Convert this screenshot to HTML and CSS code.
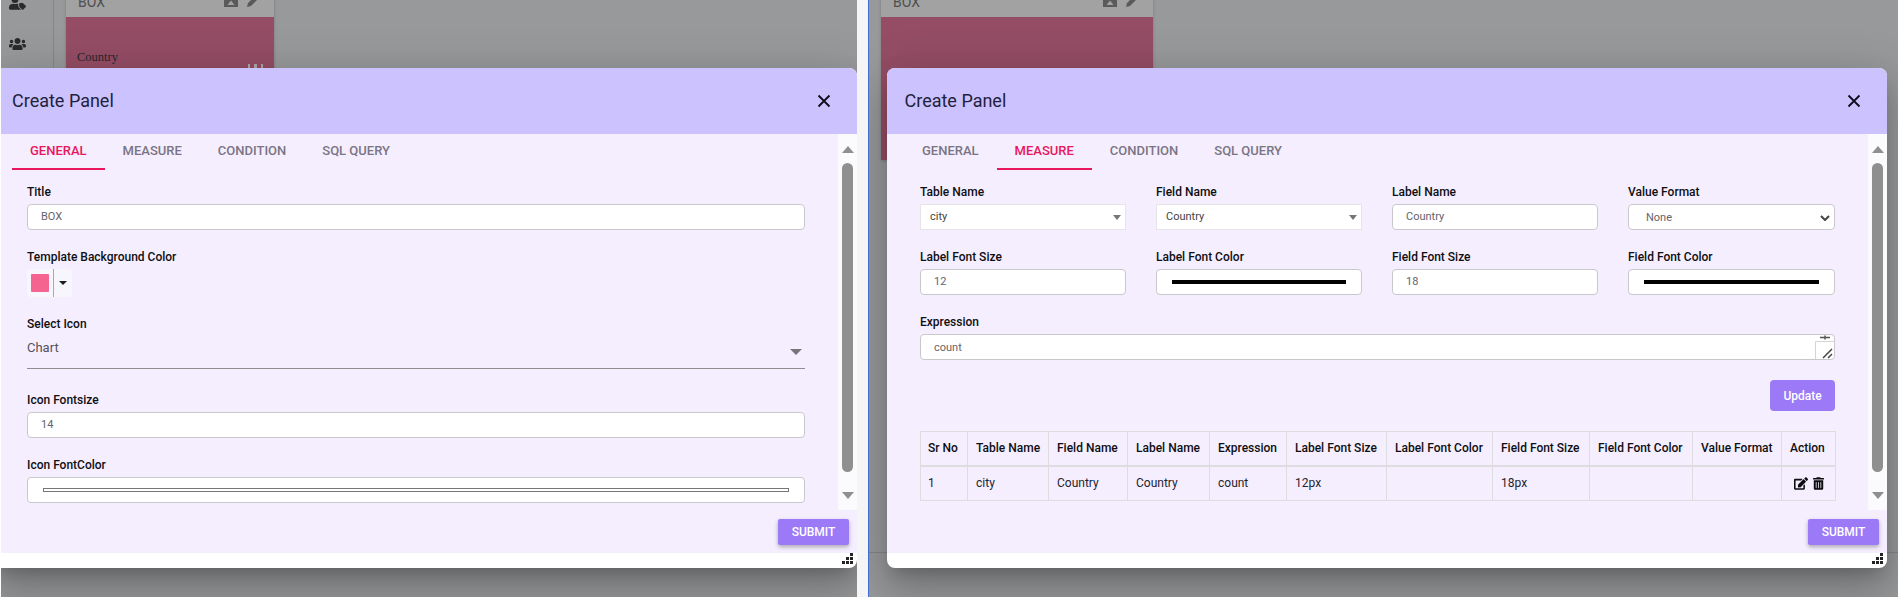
FILE: index.html
```html
<!DOCTYPE html>
<html lang="en">
<head>
<meta charset="utf-8">
<title>Create Panel</title>
<link rel="stylesheet" href="styles.css">
</head>
<body>

<!-- left window : General tab -->
<div class="pane pane-left">
  <div class="page">
    <div class="page-main">
      <div class="sidebar">
        <svg class="side-icon" viewBox="0 0 640 512"><circle cx="224" cy="128" r="128"/><path d="M0 464v-40c0-88 70-138 162-138 40 16 84 16 124 0 22 0 42 3 62 8v70c0 22 8 42 24 58l86 86H48c-26 0-48-18-48-44z"/><path d="M416 256h80c16 0 32 6 44 18l90 90c13 13 13 33 0 46l-92 92c-13 13-33 13-46 0l-90-90c-12-12-18-28-18-44v-80c0-18 14-32 32-32z"/></svg>
        <svg class="side-icon" viewBox="0 0 640 512"><path d="M96 224c35.3 0 64-28.7 64-64s-28.7-64-64-64-64 28.7-64 64 28.7 64 64 64zm448 0c35.3 0 64-28.7 64-64s-28.7-64-64-64-64 28.7-64 64 28.7 64 64 64zm32 32h-64c-17.6 0-33.5 7.1-45.1 18.6 40.3 22.1 68.9 62 75.1 109.4h66c17.7 0 32-14.3 32-32v-32c0-35.3-28.7-64-64-64zm-256 0c61.9 0 112-50.1 112-112S381.9 32 320 32 208 82.1 208 144s50.1 112 112 112zm76.8 32h-8.3c-20.8 10-43.9 16-68.5 16s-47.6-6-68.5-16h-8.3C179.6 288 128 339.6 128 403.2V432c0 26.5 21.5 48 48 48h288c26.5 0 48-21.5 48-48v-28.8c0-63.6-51.6-115.2-115.2-115.2zm-223.7-13.4C161.5 263.1 145.6 256 128 256H64c-35.3 0-64 28.7-64 64v32c0 17.7 14.3 32 32 32h65.9c6.3-47.4 34.9-87.3 75.2-109.4z"/></svg>
      </div>
      <div class="card card-small">
        <div class="card-head">
          <span class="card-name">BOX</span>
          <svg class="card-icon" viewBox="0 0 14 14"><path d="M0 0h14v14H0z"/><path class="cut" d="M7 7.500l3.500 4.500h-7z"/></svg>
          <svg class="card-icon" viewBox="0 0 14 14"><path d="M9 2l3 3-8 8-4 1 1-4z"/></svg>
        </div>
        <div class="card-body">
          <div class="card-label">Country</div>
          <div class="card-bars"><i></i><i></i><i></i></div>
        </div>
      </div>
    </div>
    <div class="page-foot"></div>
  </div>

  <div class="dialog dialog-left">
    <div class="dialog-head">
      <h2>Create Panel</h2>
      <svg class="close-icon" viewBox="0 0 14 14"><path d="M1.500 1.500l11 11M12.500 1.500l-11 11"/></svg>
    </div>
    <div class="dialog-body">
      <div class="scroll-area">
        <div class="scroll-content">
          <div class="tabs">
            <div class="tab active">General</div>
            <div class="tab">Measure</div>
            <div class="tab">Condition</div>
            <div class="tab">SQL Query</div>
          </div>
          <div class="form">
            <div class="field">
              <label>Title</label>
              <div class="input">BOX</div>
            </div>
            <div class="field">
              <label>Template Background Color</label>
              <div class="color-btn"><span class="color-swatch"></span><span class="color-caret"></span></div>
            </div>
            <div class="field field-select">
              <label>Select Icon</label>
              <div class="mat-select">Chart<span class="arrow"></span></div>
            </div>
            <div class="field">
              <label>Icon Fontsize</label>
              <div class="input">14</div>
            </div>
            <div class="field">
              <label>Icon FontColor</label>
              <div class="input color-input"><span class="color-bar color-bar-empty"></span></div>
            </div>
          </div>
        </div>
        <div class="scrollbar">
          <span class="sb-up"></span>
          <span class="sb-thumb"></span>
          <span class="sb-down"></span>
        </div>
      </div>
      <div class="dialog-actions"><button class="btn btn-raised">SUBMIT</button></div>
    </div>
    <div class="dialog-foot">
      <svg class="grip" viewBox="0 0 11 11"><path d="M8 0h3v3H8zM4 4h3v3H4zM8 4h3v3H8zM0 8h3v3H0zM4 8h3v3H4zM8 8h3v3H8z"/></svg>
    </div>
  </div>
</div>

<div class="divider"></div>

<!-- right window : Measure tab -->
<div class="pane pane-right">
  <div class="page">
    <div class="page-main">
      <div class="card card-wide">
        <div class="card-head">
          <span class="card-name">BOX</span>
          <svg class="card-icon" viewBox="0 0 14 14"><path d="M0 0h14v14H0z"/><path class="cut" d="M7 7.500l3.500 4.500h-7z"/></svg>
          <svg class="card-icon" viewBox="0 0 14 14"><path d="M9 2l3 3-8 8-4 1 1-4z"/></svg>
        </div>
        <div class="card-body"></div>
      </div>
    </div>
    <div class="page-foot"></div>
  </div>

  <div class="dialog dialog-right">
    <div class="dialog-head">
      <h2>Create Panel</h2>
      <svg class="close-icon" viewBox="0 0 14 14"><path d="M1.500 1.500l11 11M12.500 1.500l-11 11"/></svg>
    </div>
    <div class="dialog-body">
      <div class="scroll-area">
        <div class="scroll-content">
          <div class="tabs">
            <div class="tab">General</div>
            <div class="tab active">Measure</div>
            <div class="tab">Condition</div>
            <div class="tab">SQL Query</div>
          </div>
          <div class="form">
            <div class="form-grid">
              <div class="field">
                <label>Table Name</label>
                <div class="input input-square">city<span class="arrow"></span></div>
              </div>
              <div class="field">
                <label>Field Name</label>
                <div class="input input-square">Country<span class="arrow"></span></div>
              </div>
              <div class="field">
                <label>Label Name</label>
                <div class="input">Country</div>
              </div>
              <div class="field">
                <label>Value Format</label>
                <div class="input input-native">None
                  <svg class="chevron" viewBox="0 0 10 6"><path d="M1 1l4 4 4-4"/></svg>
                </div>
              </div>
              <div class="field">
                <label>Label Font Size</label>
                <div class="input">12</div>
              </div>
              <div class="field">
                <label>Label Font Color</label>
                <div class="input color-input"><span class="color-bar"></span></div>
              </div>
              <div class="field">
                <label>Field Font Size</label>
                <div class="input">18</div>
              </div>
              <div class="field">
                <label>Field Font Color</label>
                <div class="input color-input"><span class="color-bar"></span></div>
              </div>
            </div>
            <div class="field field-last">
              <label>Expression</label>
              <div class="input input-area">count
                <svg class="area-resize" viewBox="0 0 20 26"><path class="area-box" d="M.5 26V7.500H20"/><path class="area-spin" d="M5 3.500h10M10 1.500v4"/><path class="area-hatch" d="M8 24l9-9M13 24l4-4"/></svg>
              </div>
            </div>
            <div class="update-row"><button class="btn">Update</button></div>
            <table class="measure-table">
              <thead>
                <tr>
                  <th>Sr No</th><th>Table Name</th><th>Field Name</th><th>Label Name</th><th>Expression</th><th>Label Font Size</th><th>Label Font Color</th><th>Field Font Size</th><th>Field Font Color</th><th>Value Format</th><th>Action</th>
                </tr>
              </thead>
              <tbody>
                <tr>
                  <td>1</td><td>city</td><td>Country</td><td>Country</td><td>count</td><td>12px</td><td></td><td>18px</td><td></td><td></td>
                  <td class="row-actions">
                    <svg class="edit-icon" viewBox="0 0 576 512"><path d="M402.6 83.2l90.2 90.2c3.8 3.8 3.8 10 0 13.8L274.4 405.6l-92.8 10.3c-12.4 1.4-22.9-9.1-21.5-21.5l10.3-92.8L388.8 83.2c3.8-3.8 10-3.8 13.8 0zm162-22.9l-48.8-48.8c-15.2-15.2-39.9-15.2-55.2 0l-35.4 35.4c-3.8 3.8-3.8 10 0 13.8l90.2 90.2c3.8 3.8 10 3.8 13.8 0l35.4-35.4c15.2-15.3 15.2-40 0-55.2zM384 346.2V448H64V128h229.8c3.2 0 6.2-1.3 8.5-3.5l40-40c7.6-7.6 2.2-20.5-8.5-20.5H48C21.5 64 0 85.5 0 112v352c0 26.5 21.5 48 48 48h352c26.5 0 48-21.5 48-48V306.2c0-10.7-12.9-16-20.5-8.5l-40 40c-2.2 2.3-3.5 5.3-3.5 8.5z"/></svg>
                    <svg class="trash-icon" viewBox="0 0 448 512"><path d="M32 464a48 48 0 0 0 48 48h288a48 48 0 0 0 48-48V128H32zm272-256a16 16 0 0 1 32 0v224a16 16 0 0 1-32 0zm-96 0a16 16 0 0 1 32 0v224a16 16 0 0 1-32 0zm-96 0a16 16 0 0 1 32 0v224a16 16 0 0 1-32 0zM432 32H312l-9.4-18.7A24 24 0 0 0 281.1 0H166.8a23.72 23.72 0 0 0-21.4 13.3L136 32H16A16 16 0 0 0 0 48v32a16 16 0 0 0 16 16h416a16 16 0 0 0 16-16V48a16 16 0 0 0-16-16z"/></svg>
                  </td>
                </tr>
              </tbody>
            </table>
          </div>
        </div>
        <div class="scrollbar">
          <span class="sb-up"></span>
          <span class="sb-thumb"></span>
          <span class="sb-down"></span>
        </div>
      </div>
      <div class="dialog-actions"><button class="btn btn-raised">SUBMIT</button></div>
    </div>
    <div class="dialog-foot">
      <svg class="grip" viewBox="0 0 11 11"><path d="M8 0h3v3H8zM4 4h3v3H4zM8 4h3v3H8zM0 8h3v3H0zM4 8h3v3H4zM8 8h3v3H8z"/></svg>
    </div>
  </div>
</div>

</body>
</html>
```

FILE: styles.css
```css
* {
    box-sizing: border-box;
}

html, body {
    height: 100%;
}

body {
    margin: 0;
    padding-left: 1px;
    display: flex;
    overflow: hidden;
    background-color: #fff;
    font-family: Roboto, "Liberation Sans", Arial, sans-serif;
    font-size: 12px;
    color: #212529;
}

/* the two browser windows */
.pane {
    position: relative;
    height: 597px;
    overflow: hidden;
    background-color: #98999b;
}
.pane-left { width: 856px; }
.pane-right { width: 1029px; }

.divider {
    width: 12px;
    background-color: #f5f5f6;
    border-right: 1px solid #3f6fd6;
}

/* page behind the dialog */
.page {
    height: 100%;
    display: flex;
    flex-direction: column;
}
.page-main {
    display: flex;
    height: 552px;
    align-items: flex-start;
}
.page-foot {
    flex: 1;
    border-top: 1px solid #858585;
}

.sidebar {
    width: 53px;
    height: 100%;
    padding-left: 8px;
    border-right: 1px solid #858687;
    display: flex;
    flex-direction: column;
    align-items: flex-start;
}
.side-icon {
    width: 17px;
    height: 14px;
    fill: #2a2a2c;
}
.sidebar .side-icon:first-child {
    margin-top: -4px;
    margin-bottom: 27px;
}

.card {
    margin-left: 12px;
    margin-top: -20px;
    box-shadow: 0 1px 3px rgba(0,0,0,.2);
}
.card-small { width: 208px; }
.card-wide { width: 272px; }

.card-head {
    height: 37px;
    padding: 14px 13px 0 12px;
    display: flex;
    gap: 9px;
    background-color: #a2a2a3;
}
.card-name {
    flex: 1;
    font-size: 14px;
    line-height: 16px;
    color: #4f4f50;
}
.card-icon {
    width: 14px;
    height: 14px;
    margin-top: -1px;
    fill: #5a5a5b;
}
.card-icon .cut {
    fill: #a2a2a3;
}
.card-body {
    height: 143px;
    padding: 31px 11px 0;
    background-color: #944d65;
}
.card-label {
    font-family: "Liberation Serif", serif;
    font-size: 12.5px;
    line-height: 18px;
    color: #2b2629;
}
.card-bars {
    display: flex;
    justify-content: flex-end;
    gap: 4px;
    margin: -2px 0 0;
}
.card-bars i {
    width: 2px;
    height: 8px;
    background-color: #b7a3ab;
}
.card-bars i:nth-child(2) {
    width: 3px;
}

/* dialog */
.dialog {
    position: absolute;
    top: 68px;
    height: 500px;
    display: flex;
    flex-direction: column;
    background-color: #fff;
    border-radius: 8px;
    overflow: hidden;
    box-shadow: 0 11px 15px -7px rgba(0,0,0,.2), 0 24px 38px 3px rgba(0,0,0,.14), 0 9px 46px 8px rgba(0,0,0,.12);
}
.dialog-left {
    left: -7px;
    width: 863px;
}
.dialog-right {
    left: 18px;
    width: 1000px;
}

.dialog-head {
    height: 66px;
    flex: none;
    padding: 0 26px 1px 18px;
    display: flex;
    align-items: center;
    justify-content: space-between;
    background-color: #ccc2fd;
}
.dialog-right .dialog-head {
    padding-left: 17.5px;
}
.dialog-head h2 {
    margin: 0;
    font-size: 18px;
    font-weight: 400;
    color: #221f3d;
}
.close-icon {
    width: 14px;
    height: 14px;
    fill: none;
    stroke: #0e0c1c;
    stroke-width: 1.8;
}

.dialog-body {
    height: 419px;
    flex: none;
    display: flex;
    flex-direction: column;
    background-color: #f5eefe;
}
.scroll-area {
    height: 376px;
    flex: none;
    display: flex;
}
.scroll-content {
    flex: 1;
    min-width: 0;
    overflow: hidden;
}

.scrollbar {
    width: 19px;
    flex: none;
    padding-top: 12px;
    display: flex;
    flex-direction: column;
    align-items: center;
    background-color: #fbfafc;
}
.sb-up {
    width: 0;
    height: 0;
    border-left: 6.5px solid transparent;
    border-right: 6.5px solid transparent;
    border-bottom: 7px solid #8f8f8f;
}
.sb-thumb {
    width: 11px;
    height: 309px;
    margin-top: 10px;
    border-radius: 6px;
    background-color: #8f8f8f;
}
.sb-down {
    width: 0;
    height: 0;
    margin-top: 20px;
    border-left: 6.5px solid transparent;
    border-right: 6.5px solid transparent;
    border-top: 7px solid #8f8f8f;
}

.dialog-actions {
    flex: 1;
    padding: 9px 8px 0 0;
    display: flex;
    justify-content: flex-end;
    align-items: flex-start;
}
.dialog-foot {
    flex: 1;
    padding: 0 4px 0 0;
    display: flex;
    justify-content: flex-end;
}
.grip {
    width: 11px;
    height: 11px;
    fill: #222;
}

/* tabs */
.tabs {
    height: 36px;
    padding-left: 18px;
    display: flex;
}
.dialog-right .tabs {
    padding-left: 17px;
}
.tab {
    padding: 0 18px;
    line-height: 34px;
    font-size: 13px;
    font-weight: 500;
    text-transform: uppercase;
    color: #7a7585;
    border-bottom: 2px solid transparent;
}
.tab.active {
    color: #e8175d;
    border-bottom-color: #e8175d;
}

/* form */
.form {
    padding: 13px 33px 0;
}
.form-grid {
    display: grid;
    grid-template-columns: 206px 206px 206px 207px;
    column-gap: 30px;
}
.field {
    margin-bottom: 18px;
}
.field label {
    display: block;
    height: 18px;
    margin-bottom: 3px;
    font-weight: 500;
    line-height: 18px;
    color: #0f0f12;
}
.input {
    position: relative;
    height: 26px;
    padding: 0 13px;
    border: 1px solid #c9c8cc;
    border-radius: 4px;
    background-color: #fff;
    font-size: 11px;
    line-height: 23px;
    color: #66646b;
}
.input-square {
    padding: 0 9px;
    border-color: #e6e4ea;
    border-radius: 0;
    color: #444;
}
.input-native {
    padding-left: 17px;
    line-height: 26px;
}
.chevron {
    position: absolute;
    top: 10px;
    right: 4px;
    width: 10px;
    height: 6px;
    fill: none;
    stroke: #444;
    stroke-width: 2;
}
.arrow {
    position: absolute;
    top: 10px;
    right: 4px;
    width: 0;
    height: 0;
    border-left: 4.5px solid transparent;
    border-right: 4.5px solid transparent;
    border-top: 5px solid #77757c;
}

.color-input {
    padding: 10px 15px 0;
}
.color-bar {
    display: block;
    height: 4px;
    background-color: #000;
}
.color-bar-empty {
    background-color: #fff;
    border: 1px solid #767676;
}

.color-btn {
    width: 45px;
    height: 28px;
    display: flex;
    border-radius: 4px;
    background-color: #f8f6fd;
}
.color-swatch {
    width: 18px;
    height: 18px;
    margin: 5px 4px;
    border-radius: 1px;
    background-color: #f56391;
}
.color-caret {
    width: 19px;
    border-left: 1px solid #a9a8ac;
    position: relative;
}
.color-caret::after {
    content: "";
    position: absolute;
    left: 5px;
    top: 12px;
    border-left: 4px solid transparent;
    border-right: 4px solid transparent;
    border-top: 4px solid #1b1b1b;
}

.field-select {
    margin-bottom: 22px;
}
.field-select label {
    margin-bottom: 4px;
}
.mat-select {
    position: relative;
    height: 32px;
    font-size: 13px;
    line-height: 21px;
    color: #55525c;
    border-bottom: 1px solid #8f8c94;
}
.mat-select .arrow {
    top: 12px;
    right: 3px;
    border-left-width: 6px;
    border-right-width: 6px;
    border-top-width: 6px;
}

.field-last {
    margin-bottom: 20px;
}
.input-area {
    overflow: hidden;
    line-height: 26px;
}
.area-resize {
    position: absolute;
    top: -1px;
    right: -1px;
    width: 20px;
    height: 26px;
    fill: none;
}
.area-box {
    stroke: #d4d4d6;
}
.area-spin {
    stroke: #555;
    stroke-width: 1.5;
}
.area-hatch {
    stroke: #444;
    stroke-width: 1.5;
}

.update-row {
    display: flex;
    justify-content: flex-end;
    margin-bottom: 20px;
}

.btn {
    border: 0;
    border-radius: 4px;
    background-color: #9c79f7;
    color: #fff;
    font-family: inherit;
    font-size: 12px;
    font-weight: 500;
}
.update-row .btn {
    width: 65px;
    height: 31px;
}
.btn-raised {
    width: 71px;
    height: 26px;
    border-radius: 2px;
    box-shadow: 0 2px 4px rgba(0,0,0,.3);
}

/* measure table */
.measure-table {
    width: 915px;
    table-layout: fixed;
    border-collapse: collapse;
}
.measure-table th, .measure-table td {
    height: 35px;
    padding: 0 8px;
    border: 1px solid #dddcdf;
    text-align: left;
    white-space: nowrap;
    font-size: 12px;
}
.measure-table th {
    height: 34px;
    font-weight: 500;
    color: #0f0f12;
    border-bottom-width: 2px;
}
.measure-table td {
    color: #1c2430;
}
.measure-table th:first-child, .measure-table td:first-child {
    padding-left: 7px;
}
.measure-table th:nth-child(1) { width: 47px; }
.measure-table th:nth-child(2) { width: 81px; }
.measure-table th:nth-child(3) { width: 79px; }
.measure-table th:nth-child(4) { width: 82px; }
.measure-table th:nth-child(5) { width: 77px; }
.measure-table th:nth-child(6) { width: 100px; }
.measure-table th:nth-child(7) { width: 106px; }
.measure-table th:nth-child(8) { width: 97px; }
.measure-table th:nth-child(9) { width: 103px; }
.measure-table th:nth-child(10) { width: 89px; }
.measure-table th:nth-child(11) { width: 54px; }

.measure-table td.row-actions {
    padding: 0 3px 0 0;
    text-align: right;
}
.edit-icon, .trash-icon {
    height: 13px;
    fill: #0b0b10;
    vertical-align: middle;
}
.edit-icon {
    width: 14px;
    margin-right: 2px;
}
.trash-icon {
    width: 11px;
    margin-right: 8px;
}
```
